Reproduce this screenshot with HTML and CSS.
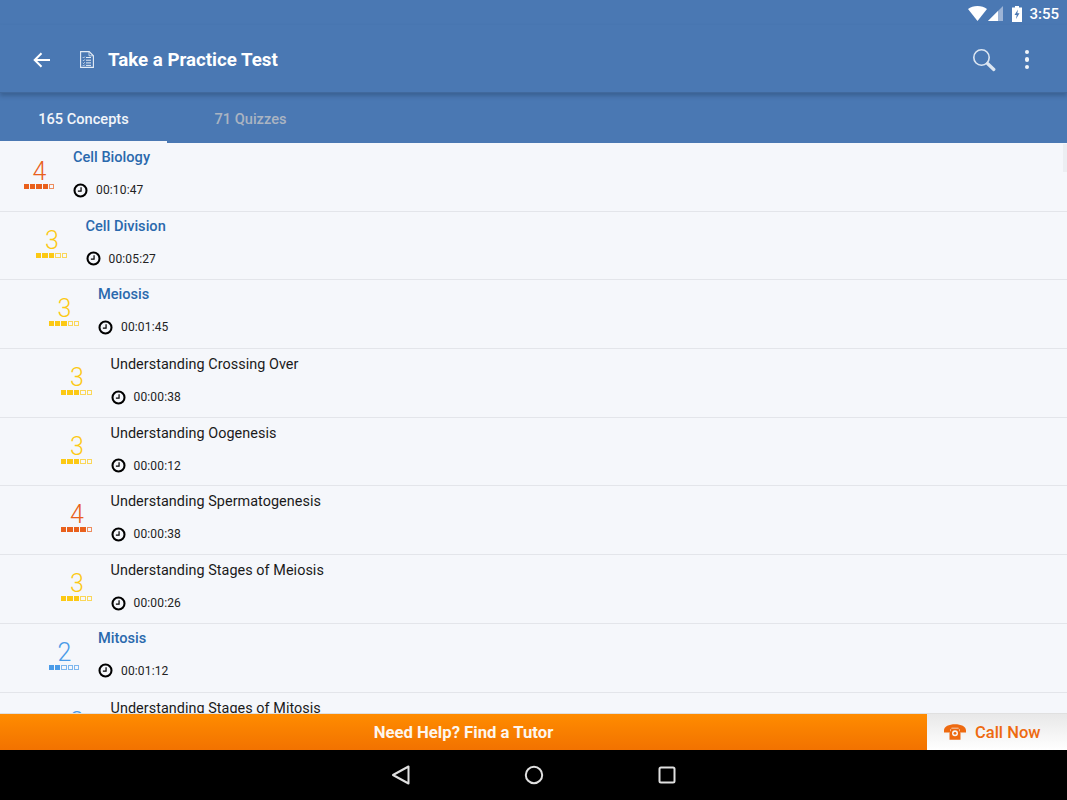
FILE: index.html
```html
<!DOCTYPE html>
<html lang="en">
<head>
  <meta charset="utf-8">
  <meta name="viewport" content="width=device-width, initial-scale=1.0">
  <title>Take a Practice Test</title>
  <link rel="stylesheet" href="styles.css">
</head>
<body>
  <svg class="defs">
    <symbol id="clock" viewBox="0 0 16 16">
      <circle cx="8" cy="8" r="6.4" fill="none" stroke="#000" stroke-width="2.2"/>
      <path d="M8.600 4.400v4.200H5.200" fill="none" stroke="#000" stroke-width="1.300"/>
    </symbol>
  </svg>

  <div class="header">
    <div class="status-bar">
      <svg class="wifi" viewBox="0 0 19 15"><path d="M0 3C2.500 1 5.800 0 9.500 0S16.500 1 19 3L9.500 15z" fill="#fff"/></svg>
      <svg class="signal" viewBox="0 0 15 15">
        <path d="M15 0v15H0z" fill="#9db4d6"/>
        <path d="M10 5v10H0z" fill="#fff"/>
      </svg>
      <svg class="battery" viewBox="0 0 10 16">
        <path d="M3 0h4v1.500h3V16H0V1.500h3z" fill="#fff"/>
        <path d="M6 3.500L2.500 9h2.200l-.7 4 3.500-5.700H5.300z" fill="#4a78b3"/>
      </svg>
      <span class="clock-text">3:55</span>
    </div>
    <div class="toolbar">
      <svg class="back" viewBox="0 0 18 16"><path d="M17 8H2M8.500 1.200L1.700 8l6.800 6.800" fill="none" stroke="#fff" stroke-width="2"/></svg>
      <svg class="doc" viewBox="0 0 14 17">
        <path d="M.6.600h8.600l4.200 4.200v11.600H.6z" fill="#4a78b3" stroke="#e4ecf6" stroke-width="1.100"/>
        <path d="M9 .8v4h4.200" fill="none" stroke="#e4ecf6" stroke-width=".8"/>
        <path d="M2.800 6.200l.8.8 1.200-1.400M2.800 9l.8.8L4.800 8.400M2.800 11.800l.8.8 1.200-1.400M2.800 14.200l.8.8 1.200-1.400" fill="none" stroke="#e4ecf6" stroke-width=".8"/>
        <path d="M6 6.500h5M6 9.200h5M6 11.900h5M6 14.400h5" stroke="#e4ecf6" stroke-width="1"/>
      </svg>
      <h1 class="title">Take a Practice Test</h1>
      <svg class="search" viewBox="0 0 24 24">
        <circle cx="9.500" cy="9.500" r="7.700" fill="none" stroke="#dce6f2" stroke-width="1.600"/>
        <path d="M15.500 15.500l6.300 6" stroke="#dce6f2" stroke-width="3.200" stroke-linecap="round"/>
      </svg>
      <div class="more"><i></i><i></i><i></i></div>
    </div>
    <div class="tabs">
      <div class="tab active">165 Concepts</div>
      <div class="tab">71 Quizzes</div>
    </div>
  </div>

  <div class="list">
    <div class="scroll-thumb"></div>

    <div class="row level-0">
      <div class="score orange"><span class="num">4</span><span class="bars"><i class="on"></i><i class="on"></i><i class="on"></i><i class="on"></i><i></i></span></div>
      <div class="info">
        <div class="name topic">Cell Biology</div>
        <div class="time"><svg class="clock"><use href="#clock"/></svg>00:10:47</div>
      </div>
    </div>

    <div class="row level-1">
      <div class="score yellow"><span class="num">3</span><span class="bars"><i class="on"></i><i class="on"></i><i class="on"></i><i></i><i></i></span></div>
      <div class="info">
        <div class="name topic">Cell Division</div>
        <div class="time"><svg class="clock"><use href="#clock"/></svg>00:05:27</div>
      </div>
    </div>

    <div class="row level-2">
      <div class="score yellow"><span class="num">3</span><span class="bars"><i class="on"></i><i class="on"></i><i class="on"></i><i></i><i></i></span></div>
      <div class="info">
        <div class="name topic">Meiosis</div>
        <div class="time"><svg class="clock"><use href="#clock"/></svg>00:01:45</div>
      </div>
    </div>

    <div class="row level-3">
      <div class="score yellow"><span class="num">3</span><span class="bars"><i class="on"></i><i class="on"></i><i class="on"></i><i></i><i></i></span></div>
      <div class="info">
        <div class="name">Understanding Crossing Over</div>
        <div class="time"><svg class="clock"><use href="#clock"/></svg>00:00:38</div>
      </div>
    </div>

    <div class="row level-3">
      <div class="score yellow"><span class="num">3</span><span class="bars"><i class="on"></i><i class="on"></i><i class="on"></i><i></i><i></i></span></div>
      <div class="info">
        <div class="name">Understanding Oogenesis</div>
        <div class="time"><svg class="clock"><use href="#clock"/></svg>00:00:12</div>
      </div>
    </div>

    <div class="row level-3">
      <div class="score orange"><span class="num">4</span><span class="bars"><i class="on"></i><i class="on"></i><i class="on"></i><i class="on"></i><i></i></span></div>
      <div class="info">
        <div class="name">Understanding Spermatogenesis</div>
        <div class="time"><svg class="clock"><use href="#clock"/></svg>00:00:38</div>
      </div>
    </div>

    <div class="row level-3">
      <div class="score yellow"><span class="num">3</span><span class="bars"><i class="on"></i><i class="on"></i><i class="on"></i><i></i><i></i></span></div>
      <div class="info">
        <div class="name">Understanding Stages of Meiosis</div>
        <div class="time"><svg class="clock"><use href="#clock"/></svg>00:00:26</div>
      </div>
    </div>

    <div class="row level-2">
      <div class="score blue"><span class="num">2</span><span class="bars"><i class="on"></i><i class="on"></i><i></i><i></i><i></i></span></div>
      <div class="info">
        <div class="name topic">Mitosis</div>
        <div class="time"><svg class="clock"><use href="#clock"/></svg>00:01:12</div>
      </div>
    </div>

    <div class="row level-3">
      <div class="score blue"><span class="num">2</span><span class="bars"><i class="on"></i><i class="on"></i><i></i><i></i><i></i></span></div>
      <div class="info">
        <div class="name">Understanding Stages of Mitosis</div>
        <div class="time"><svg class="clock"><use href="#clock"/></svg>00:00:30</div>
      </div>
    </div>
  </div>

  <div class="cta">
    <div class="cta-tutor">Need Help? Find a Tutor</div>
    <div class="cta-call">
      <svg class="phone" viewBox="0 0 22 16">
        <path d="M0 6.500C0 2.500 5 .3 11 .3S22 2.500 22 6.500V8.500h-6V5.500h-1.500V3.800h-7v1.700H6v3H0z" fill="#ee6a10"/>
        <path d="M5.500 15.800V9l2-4.500h7l2 4.500v6.800z" fill="#ee6a10"/>
        <circle cx="11" cy="9.300" r="3" fill="#f6f6f6"/>
        <circle cx="11" cy="9.300" r="1.400" fill="#ee6a10"/>
      </svg>
      <span>Call Now</span>
    </div>
  </div>

  <div class="nav-bar">
    <svg class="nav-icon" viewBox="0 0 20 20"><path d="M17.500 1.500v17L2 10z" fill="none" stroke="#e0e0e0" stroke-width="2" stroke-linejoin="round"/></svg>
    <svg class="nav-icon" viewBox="0 0 20 20"><circle cx="10" cy="10" r="8.200" fill="none" stroke="#e0e0e0" stroke-width="2"/></svg>
    <svg class="nav-icon" viewBox="0 0 20 20"><rect x="2.500" y="2.500" width="15" height="15" rx="1.500" fill="none" stroke="#e0e0e0" stroke-width="2"/></svg>
  </div>
</body>
</html>
```

FILE: styles.css
```css
* {
  box-sizing: border-box;
}

body {
  font-family: 'Roboto', sans-serif;
  margin: 0;
  height: 800px;
  display: flex;
  flex-direction: column;
  overflow: hidden;
  background-color: #f5f7fb;
  color: #111;
}

.defs {
  display: none;
}

.header {
  flex: none;
  background-color: #4a78b3;
}

.status-bar {
  height: 25px;
  display: flex;
  align-items: center;
  justify-content: flex-end;
  padding: 2px 8px 0 0;
  color: #fff;
}

.wifi {
  width: 19px;
  height: 15px;
}

.signal {
  width: 15px;
  height: 15px;
  margin-left: 1px;
}

.battery {
  width: 10px;
  height: 16px;
  margin-left: 9px;
}

.clock-text {
  font-size: 15px;
  font-weight: 500;
  margin-left: 7px;
}

.toolbar {
  height: 68px;
  display: flex;
  align-items: center;
  padding: 2px 38px 0 33px;
  border-bottom: 1px solid #41699d;
  box-shadow: 0 3px 4px rgba(40, 70, 110, 0.45);
  position: relative;
}

.back {
  width: 18px;
  height: 16px;
}

.doc {
  width: 14px;
  height: 17px;
  margin-left: 29px;
}

.title {
  flex: 1;
  margin: 0 0 0 14px;
  font-size: 18.700px;
  font-weight: 700;
  color: #fff;
}

.search {
  width: 24px;
  height: 24px;
  margin-right: 29px;
}

.more {
  display: flex;
  flex-direction: column;
  gap: 3px;
}

.more i {
  width: 4.500px;
  height: 4.500px;
  border-radius: 50%;
  background-color: #f1f5fa;
}

.tabs {
  height: 50px;
  display: flex;
}

.tab {
  width: 167px;
  padding-top: 17px;
  text-align: center;
  font-size: 14.600px;
  font-weight: 500;
  color: #aab4c2;
}

.tab.active {
  color: #f2f5fa;
  border-bottom: 2px solid #f5f7fb;
}

.list {
  flex: 1;
  min-height: 0;
  overflow: hidden;
  position: relative;
}

.scroll-thumb {
  position: absolute;
  top: 1px;
  right: 0;
  width: 4px;
  height: 28px;
  background-color: #eceef2;
}

.row {
  height: 68.700px;
  display: flex;
  border-bottom: 1px solid #e3e5ea;
}

.level-0 {
  padding-left: 20px;
}

.level-1 {
  padding-left: 32.500px;
}

.level-2 {
  padding-left: 45px;
}

.level-3 {
  padding-left: 57.500px;
}

.score {
  width: 38px;
  margin-right: 15px;
  padding-top: 17px;
  display: flex;
  flex-direction: column;
  align-items: center;
}

.num {
  font-size: 25px;
  line-height: 24px;
  font-weight: 300;
  margin-left: 1px;
}

.bars {
  display: flex;
  gap: 1px;
}

.bars i {
  width: 5.400px;
  height: 5px;
  border: 1px solid currentColor;
  opacity: 0.7;
}

.bars i.on {
  background-color: currentColor;
  opacity: 1;
}

.orange {
  color: #e9601c;
}

.yellow {
  color: #fcc914;
}

.blue {
  color: #4a9be8;
}

.info {
  padding-top: 5px;
}

.name {
  margin: 2px 0 -1px;
  font-size: 14.400px;
  line-height: 18px;
  letter-spacing: 0.05px;
  color: #1a1a1a;
}

.name.topic {
  margin: 0 0 1px;
  font-size: 14.600px;
  font-weight: 500;
  letter-spacing: 0;
  color: #2a69ad;
}

.time {
  display: flex;
  align-items: center;
  margin-top: 16px;
  font-size: 12px;
  line-height: 16px;
  letter-spacing: 0.15px;
  color: #222;
}

.clock {
  width: 15px;
  height: 15px;
  margin-right: 8px;
}

.cta {
  flex: none;
  height: 37px;
  display: flex;
  border-top: 1px solid #e0e0e0;
}

.cta-tutor {
  flex: 1;
  display: flex;
  align-items: center;
  justify-content: center;
  font-size: 16.700px;
  font-weight: 700;
  color: #fdf6ee;
  background: linear-gradient(#ff8c00, #f27200);
}

.cta-call {
  width: 140px;
  display: flex;
  align-items: center;
  padding-left: 17px;
  font-size: 16.500px;
  font-weight: 500;
  color: #ee6a10;
  background: linear-gradient(#e8e8e8, #ffffff);
}

.phone {
  width: 22px;
  height: 16px;
  margin-right: 9px;
}

.nav-bar {
  flex: none;
  height: 50px;
  display: flex;
  align-items: center;
  justify-content: center;
  gap: 113px;
  background-color: #000;
}

.nav-icon {
  width: 20px;
  height: 20px;
}
```
